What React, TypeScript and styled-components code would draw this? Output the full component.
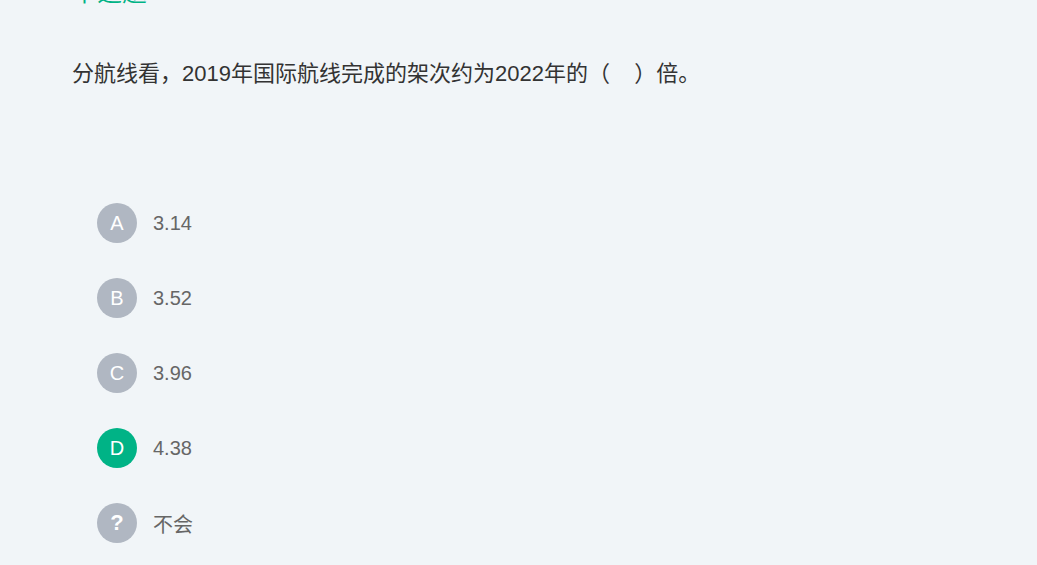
import React from "react";
import styled, { createGlobalStyle } from "styled-components";

const Global = createGlobalStyle`
  html, body { margin: 0; padding: 0; background: #f1f5f8; }
  body { font-family: "Liberation Sans", "Noto Sans CJK SC", sans-serif; overflow: hidden; }
`;

const Page = styled.div`
  width: 1037px;
  height: 565px;
  overflow: hidden;
  background: #f1f5f8;
  padding-left: 72px;
  box-sizing: border-box;
`;

const TypeLabel = styled.div`
  margin-top: -21px;
  height: 26px;
  line-height: 26px;
  font-size: 25px;
  color: #00b386;
`;

const Question = styled.div`
  margin-top: 54px;
  font-size: 22px;
  line-height: 30px;
  color: #333;
  white-space: pre;
`;

const Options = styled.div`
  margin-top: 114px;
  padding-left: 25px;
  display: flex;
  flex-direction: column;
  gap: 35px;
`;

const Row = styled.div`
  display: flex;
  align-items: center;
  height: 40px;
  gap: 16px;
`;

const Badge = styled.div<{ $active?: boolean }>`
  width: 40px;
  height: 40px;
  border-radius: 50%;
  background: ${(p) => (p.$active ? "#00b386" : "#b0b7c2")};
  color: #fff;
  font-size: 20px;
  display: flex;
  align-items: center;
  justify-content: center;
`;

const Unknown = styled(Badge)`
  font-weight: bold;
  font-size: 22px;
`;

const Label = styled.span`
  font-size: 20px;
  color: #666;
`;

const options = [
  { k: "A", v: "3.14" },
  { k: "B", v: "3.52" },
  { k: "C", v: "3.96" },
  { k: "D", v: "4.38", active: true },
];

export default function App() {
  return (
    <Page>
      <Global />
      <TypeLabel>单选题</TypeLabel>
      <Question>分航线看，2019年国际航线完成的架次约为2022年的（    ）倍。</Question>
      <Options>
        {options.map((o) => (
          <Row key={o.k}>
            <Badge $active={o.active}>{o.k}</Badge>
            <Label>{o.v}</Label>
          </Row>
        ))}
        <Row>
          <Unknown>?</Unknown>
          <Label>不会</Label>
        </Row>
      </Options>
    </Page>
  );
}
